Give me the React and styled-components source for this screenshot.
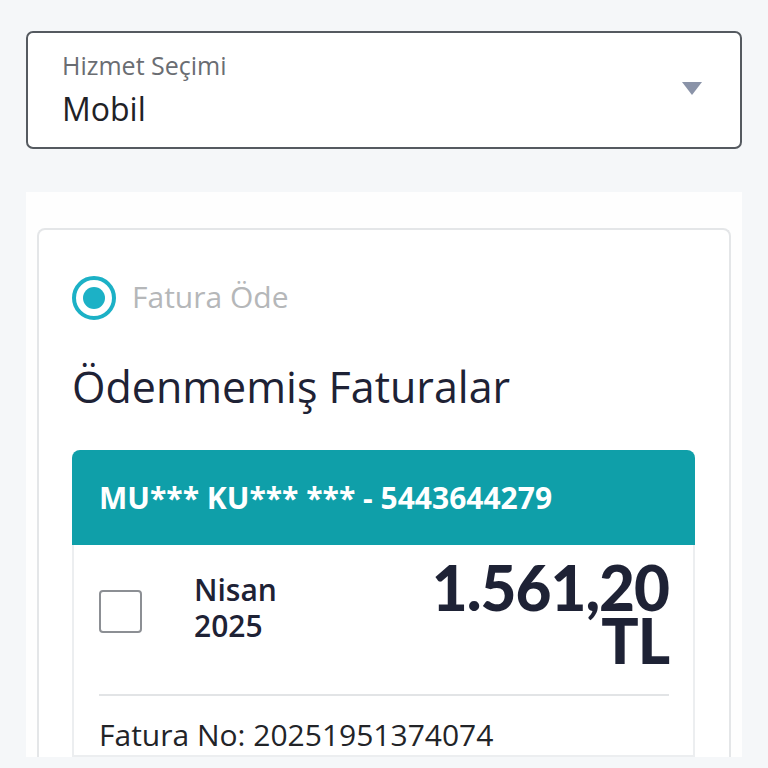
import React from "react";
import styled, { createGlobalStyle } from "styled-components";

const Global = createGlobalStyle`
  html, body { margin: 0; padding: 0; background: #f5f7f9; }
  body { font-family: "Open Sans", "Noto Sans", sans-serif; }
  * { box-sizing: border-box; }
`;

const Page = styled.div`
  padding: 31px 26px 0 26px;
  display: flex;
  flex-direction: column;
  gap: 43px;
`;

const Select = styled.div`
  height: 118px;
  border: 2px solid #555a60;
  border-radius: 7px;
  background: #fff;
  display: flex;
  align-items: center;
  justify-content: space-between;
  padding: 0 38px 0 34px;
`;

const SelectText = styled.div`
  display: flex;
  flex-direction: column;
  gap: 10px;
`;

const SelectLabel = styled.span`
  font-size: 25px;
  color: #6a6d72;
  line-height: 28px;
`;

const SelectValue = styled.span`
  font-size: 32px;
  color: #1f2226;
  line-height: 40px;
`;

const Arrow = styled.div`
  width: 0;
  height: 0;
  border-left: 10px solid transparent;
  border-right: 10px solid transparent;
  border-top: 13px solid #8a93a8;
  margin-bottom: 4px;
`;

const Panel = styled.div`
  background: #fefefe;
  padding: 36px 11px 0 11px;
`;

const Card = styled.div`
  border: 2px solid #e4e6e8;
  border-bottom: none;
  border-radius: 8px 8px 0 0;
  background: #fff;
  padding: 46px 34px 0 33px;
`;

const RadioRow = styled.div`
  display: flex;
  align-items: center;
  gap: 16px;
`;

const Radio = styled.div`
  width: 44px;
  height: 44px;
  border-radius: 50%;
  border: 4.5px solid #1cb1c6;
  display: flex;
  align-items: center;
  justify-content: center;
  &::after {
    content: "";
    width: 22px;
    height: 22px;
    border-radius: 50%;
    background: #1cb1c6;
  }
`;

const RadioLabel = styled.span`
  font-size: 30px;
  color: #b5b7b9;
  margin-top: -4px;
`;

const Title = styled.h2`
  margin: 39px 0 0 0;
  font-size: 43px;
  font-weight: 400;
  color: #1e2235;
  line-height: 56px;
`;

const Bill = styled.div`
  margin-top: 35px;
`;

const BillHeader = styled.div`
  background: #0f9fa9;
  border-radius: 8px 8px 0 0;
  height: 95px;
  display: flex;
  align-items: center;
  padding: 0 27px;
  color: #fff;
  font-size: 30px;
  font-weight: 700;
`;

const BillBody = styled.div`
  border: 2px solid #eceef0;
  border-top: none;
  padding: 16px 24px 0 25px;
`;

const BillRow = styled.div`
  display: flex;
  align-items: flex-start;
  padding-bottom: 27px;
  border-bottom: 2px solid #e2e4e6;
`;

const Check = styled.div`
  width: 43px;
  height: 43px;
  border: 2px solid #8c8f94;
  border-radius: 4px;
  flex: none;
  margin-top: 29px;
`;

const Period = styled.div`
  margin: 11px 0 0 52px;
  font-size: 30px;
  font-weight: 600;
  color: #1e2235;
  line-height: 36px;
`;

const Amount = styled.div`
  margin-left: auto;
  text-align: right;
  font-family: "Lato", "Open Sans", sans-serif;
  font-size: 62px;
  font-weight: 900;
  color: #1e2235;
  line-height: 53px;
  letter-spacing: -1px;
`;

const BillNo = styled.div`
  padding-top: 19px;
  font-size: 30px;
  line-height: 40px;
  color: #222428;
`;

export default function App() {
  return (
    <>
      <Global />
      <Page>
        <Select>
          <SelectText>
            <SelectLabel>Hizmet Seçimi</SelectLabel>
            <SelectValue>Mobil</SelectValue>
          </SelectText>
          <Arrow />
        </Select>
        <Panel>
          <Card>
            <RadioRow>
              <Radio />
              <RadioLabel>Fatura Öde</RadioLabel>
            </RadioRow>
            <Title>Ödenmemiş Faturalar</Title>
            <Bill>
              <BillHeader>MU*** KU*** *** - 5443644279</BillHeader>
              <BillBody>
                <BillRow>
                  <Check />
                  <Period>
                    Nisan
                    <br />
                    2025
                  </Period>
                  <Amount>
                    1.561,20
                    <br />
                    TL
                  </Amount>
                </BillRow>
                <BillNo>Fatura No: 20251951374074</BillNo>
              </BillBody>
            </Bill>
          </Card>
        </Panel>
      </Page>
    </>
  );
}
